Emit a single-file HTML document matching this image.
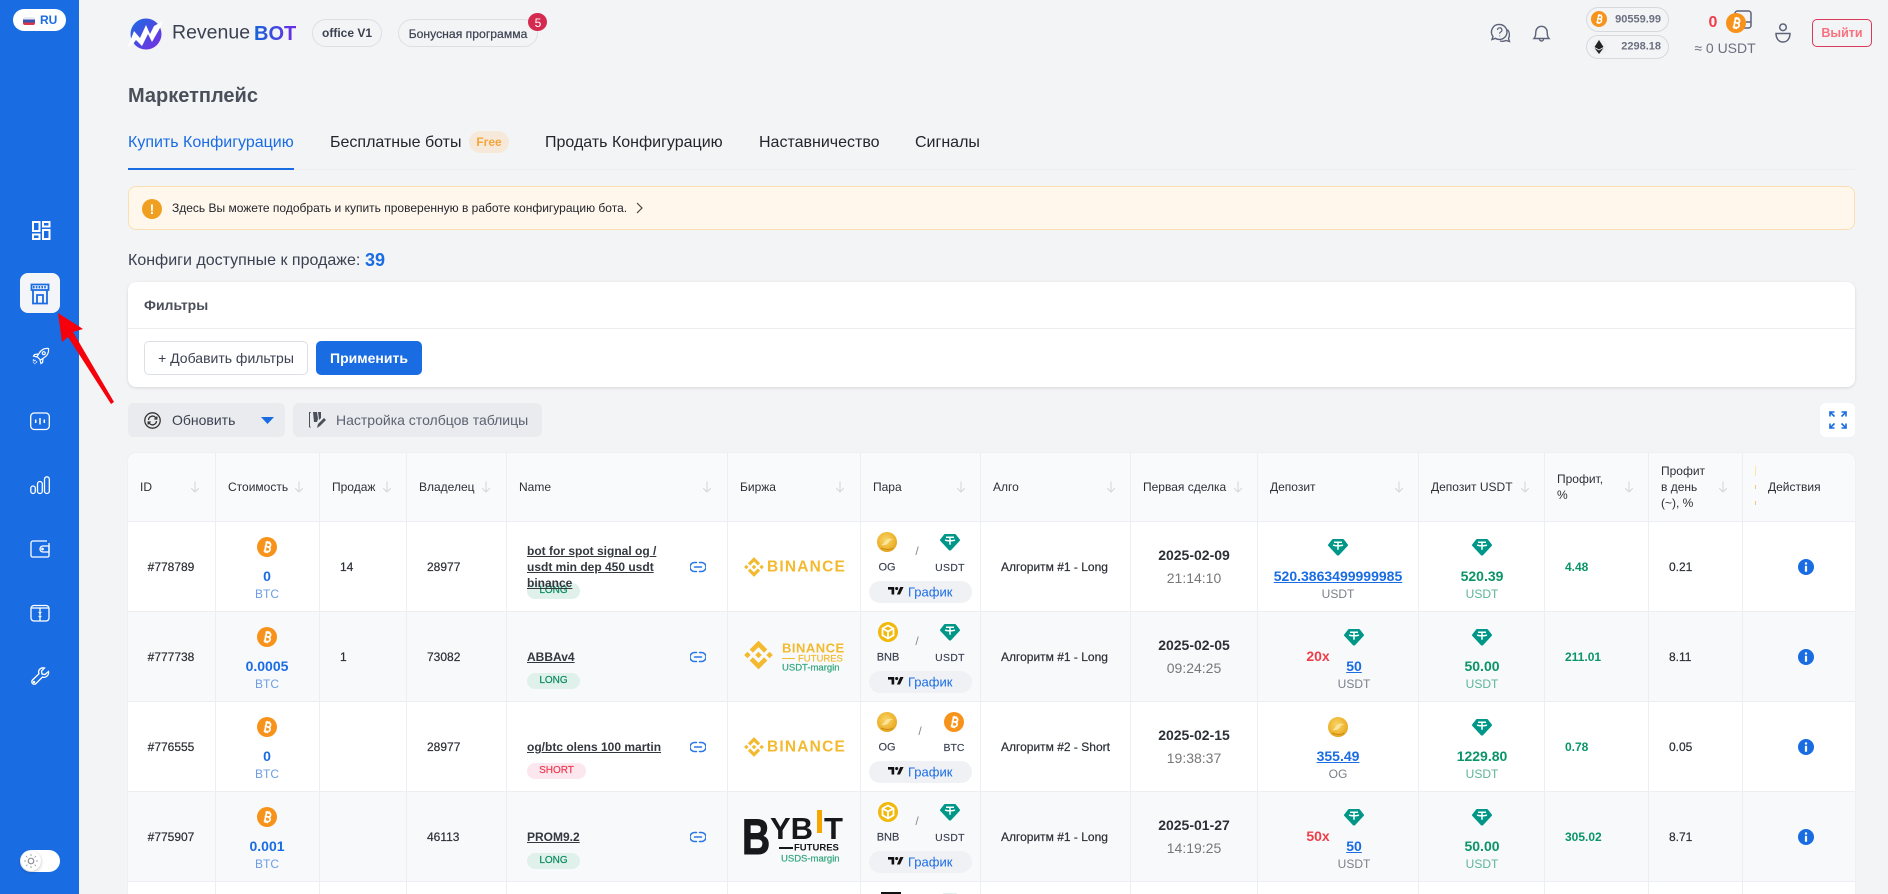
<!DOCTYPE html>
<html lang="ru"><head><meta charset="utf-8"><title>Маркетплейс</title>
<style>
html,body{margin:0;padding:0;width:1888px;height:894px;overflow:hidden;background:#f3f4f6;font-family:"Liberation Sans",Arial,sans-serif;color:#2b2f36}
*{box-sizing:border-box}
.a{position:absolute}
.t{position:absolute;white-space:nowrap;line-height:1;transform:translateY(-50%)}
.c{position:absolute;white-space:nowrap;line-height:1;transform:translate(-50%,-50%);text-align:center}
.m{-webkit-text-stroke:.2px currentColor}
.b{font-weight:700}
svg{position:absolute;overflow:visible}
.pill{position:absolute;border:1px solid #dcdfe4;border-radius:20px}
.row{position:absolute;left:128px;width:1727px;height:90px;border-bottom:1px solid #eceef2;background:#fff}
.row.e{background:#f8f9fb}
.row>*{margin-left:-128px}
.h{font-size:12px;color:#2b2f36}
.id{font-size:12px;-webkit-text-stroke:.2px}
.v{font-size:14px;font-weight:700;color:#1a6ce3}
.u{font-size:12px;color:#6e9de6}
.n{font-size:12px;font-weight:700;text-decoration:underline;color:#33373e}
.bd{position:absolute;height:16px;border-radius:8px;font-size:10px;line-height:16px;text-align:center;-webkit-text-stroke:.2px}
.long{width:53px;background:#dff1ea;color:#0b8a60}
.short{width:59px;background:#fbe7ed;color:#ee3b52}
.lb{font-size:11px;color:#3b4150;-webkit-text-stroke:.15px}
.gr{position:absolute;left:869px;top:59px;width:103px;height:22px;border-radius:11px;background:#eff1f4}
.grt{font-size:13px;color:#1a6ce3;left:908px;top:70px}
.g{font-size:14px;font-weight:700;color:#0a9468}
.gu{font-size:12px;color:#5cb596}
.gu2{font-size:12px;color:#7a7f88}
.link{color:#1a6ce3;font-size:14px;font-weight:700;text-decoration:underline}
.vl{position:absolute;top:453px;height:441px;width:1px;background:#eceef2}
.bn{font-weight:700;font-size:15.500px;letter-spacing:1.200px;color:#f3ba2f}
</style></head><body>
<svg width="0" height="0" style="position:absolute"><defs>
<symbol id="btc" viewBox="0 0 20 20"><circle cx="10" cy="10" r="10" fill="#f7931a"/><g transform="rotate(12 10 10)" fill="none" stroke="#fff" stroke-width="1.700"><path d="M7.600 5.600h3.300c1.400 0 2.200.8 2.200 2s-.8 2.100-2.200 2.100H7.600m3.300.2c1.700 0 2.700.9 2.700 2.200s-1 2.300-2.700 2.300H7.600M8.700 5.500v9M9.300 4v1.600M11.300 4v1.600M9.300 14.200V16M11.300 14.200V16"/></g></symbol>
<symbol id="usdt" viewBox="0 0 20 20"><path d="M5.200 2h9.600c.5 0 .9.200 1.200.6l3.700 4.800c.4.500.4 1.100 0 1.500l-8.600 9.200c-.6.600-1.600.6-2.200 0L.3 8.900c-.4-.4-.4-1 0-1.500L4 2.600c.3-.4.700-.6 1.200-.6z" fill="#009688"/><path d="M6 5.300h8M10 5.300v7.400M5 8.100c2.500 1 7.500 1 10 0" fill="none" stroke="#fff" stroke-width="1.500"/></symbol>
<radialGradient id="ogg" cx=".45" cy=".4" r=".7"><stop offset="0" stop-color="#f8d66a"/><stop offset=".65" stop-color="#eeb32e"/><stop offset="1" stop-color="#d99a1b"/></radialGradient>
<symbol id="og" viewBox="0 0 20 20"><circle cx="10" cy="10" r="10" fill="url(#ogg)"/><path d="M4 13c3-1 4-5 7-6s4 0 5 1c-2-.5-3 .5-4 2s-3 4-8 3z" fill="#fbe9a8" opacity=".85"/><path d="M4 16c4 2 9 2 12 0" stroke="#c98a10" fill="none"/></symbol>
<symbol id="bnb" viewBox="0 0 20 20"><circle cx="10" cy="10" r="10" fill="#f0b90b"/><path d="M10 3.500l5.500 3v6.700L10 16.500l-5.500-3.300V6.500zM4.500 6.500l5.500 3 5.500-3M10 9.500v7" fill="none" stroke="#fff" stroke-width="1.800"/></symbol>
<symbol id="lnk" viewBox="0 0 16 12"><path d="M6.500 1.500H4.500a4.500 4.500 0 0 0 0 9h2M9.500 1.500h2a4.500 4.500 0 0 1 0 9h-2M4.500 6h7" fill="none" stroke="#2a78e4" stroke-width="1.500" stroke-linecap="round"/></symbol>
<symbol id="inf" viewBox="0 0 16 16"><circle cx="8" cy="8" r="8" fill="#1a6ce3"/><circle cx="8" cy="4.500" r="1.200" fill="#fff"/><rect x="6.900" y="6.800" width="2.200" height="6" rx=".6" fill="#fff"/></symbol>
<symbol id="arr" viewBox="0 0 10 12"><path d="M5 .5v10.500M1.200 7.200 5 11l3.800-3.800" fill="none" stroke="#d6d8dd" stroke-width="1.100"/></symbol>
<symbol id="tv" viewBox="0 0 36 24"><path d="M14 20H8V9H0V3h14zM27 20h-7l7.500-17H35z" fill="#111"/><circle cx="19.500" cy="6.500" r="3.500" fill="#111"/></symbol>
<symbol id="bi" viewBox="0 0 126 126"><path d="M38.730 53.200 63 28.930l24.280 24.280 14.120-14.120L63 .69 24.610 39.090zM.69 63l14.120-14.120L28.930 63 14.810 77.120zM38.730 72.800 63 97.070l24.280-24.280 14.130 14.110L63 125.310 24.600 86.910zM97.070 63l14.120-14.120L125.310 63l-14.120 14.120zM77.330 63 63 48.660 52.400 59.260l-1.220 1.220-2.510 2.520L63 77.330z" fill="#f3ba2f"/></symbol>
<linearGradient id="lg" x1="0" y1="0" x2="1" y2="1"><stop offset="0" stop-color="#1a6ce3"/><stop offset="1" stop-color="#7a2be0"/></linearGradient>
<linearGradient id="bt" x1="0" x2="1" y1="0" y2="0"><stop offset="0" stop-color="#1467d8"/><stop offset="1" stop-color="#6d2be6"/></linearGradient>
</defs></svg>

<!-- Sidebar -->
<div class="a" style="left:0;top:0;width:79px;height:894px;background:#1a6ce3"></div>
<div class="a" style="left:13px;top:9px;width:53px;height:22px;border-radius:11px;background:#fff"></div>
<div class="a" style="left:23px;top:17px;width:12px;height:8px;border-radius:2px;background:linear-gradient(#e9ebf0 0 33%,#3a55b0 33% 66%,#d8344a 66%)"></div>
<div class="t b" style="left:40px;top:20px;font-size:12px;color:#1a6ce3">RU</div>

<svg style="left:31px;top:220px" width="20" height="20" viewBox="0 0 20 20" fill="none" stroke="#fff" stroke-width="2"><rect x="2" y="2" width="6.500" height="9"/><rect x="12" y="2" width="6.500" height="4.500"/><rect x="2" y="14.500" width="6.500" height="4.500"/><rect x="12" y="10" width="6.500" height="9"/></svg>
<div class="a" style="left:20px;top:273px;width:40px;height:40px;border-radius:8px;background:#f3f5f9"></div>
<svg style="left:30px;top:283px" width="20" height="22" viewBox="0 0 20 22" fill="none" stroke="#1a6ce3" stroke-width="1.800"><path d="M3 7v13.500h14V7"/><path d="M1.500 1.500h17v5.500h-17z"/><path d="M7 20V12h6v8"/><path d="M3 4.200h14" stroke="#1a6ce3" stroke-width="2.400" stroke-dasharray="1.600 1.200"/></svg>
<svg style="left:31px;top:346px" width="20" height="20" viewBox="0 0 20 20" fill="none" stroke="#fff" stroke-width="1.200"><path d="M17.500 2.500c-4-.5-7.500 1.500-9.500 5l-2 3 3.500 3.500 3-2c3.500-2 5.500-5.500 5-9.500z"/><circle cx="12.800" cy="7.200" r="1.500"/><path d="M7 8l-3.500.5L2.500 10l3.500 1M12 13l-.5 3.500L10 17.500 9 14"/><path d="M4.500 14l-2.500 2.500M6 15.500 3.500 18M3 13.500 1.500 15" stroke-dasharray="1.500 1"/></svg>
<svg style="left:30px;top:411px" width="20" height="20" viewBox="0 0 20 20" fill="none" stroke="#fff" stroke-width="1.300"><rect x=".7" y="2" width="18.600" height="16.500" rx="3.500"/><path d="M10 7v6.500M5.700 8.500v3.500M14.300 8.500v3.500" stroke-width="1.500"/></svg>
<svg style="left:30px;top:476px" width="20" height="20" viewBox="0 0 20 20" fill="none" stroke="#fff" stroke-width="1.300"><rect x=".8" y="10" width="4.500" height="7.500" rx="2.250"/><rect x="7.500" y="5.500" width="4.800" height="12" rx="2.400"/><rect x="14.500" y=".8" width="4.800" height="16.700" rx="2.400"/></svg>
<svg style="left:30px;top:540px" width="20" height="18" viewBox="0 0 20 18" fill="none" stroke="#fff" stroke-width="1.300"><path d="M17 1H3a2 2 0 0 0-2 2v12.500a1.500 1.500 0 0 0 1.500 1.500h15a1.500 1.500 0 0 0 1.500-1.500V3"/><path d="M19 6h-6a3 3 0 0 0 0 6h6z"/><circle cx="12.500" cy="9" r=".7" fill="#fff"/></svg>
<svg style="left:30px;top:604px" width="20" height="18" viewBox="0 0 20 18" fill="none" stroke="#fff" stroke-width="1.300"><rect x="1" y="1.500" width="18" height="15.500" rx="3"/><path d="M1 4h18M10 4v13"/><path d="M8.500 8l1.500 1.500L11.500 8M8.500 12l1.500 1.500 1.500-1.500" stroke-width=".8"/></svg>
<svg style="left:30px;top:666px" width="20" height="20" viewBox="0 0 20 20" fill="none" stroke="#fff" stroke-width="1.300"><path d="M18.500 5.500c.5 2-.5 4-2 5s-3 1-4 .5L6 17.500c-1 1-2.500 1-3.500 0S1.500 15 2.500 14L9 7.700c-.6-1.200-.6-2.800.5-4.200s3-2 5-1.500L11.500 5l.5 3 3 .5z"/><circle cx="4" cy="16" r=".6"/></svg>
<svg style="left:0;top:0" width="130" height="420"><polygon points="58,313 83,329 73,332 114,402 111,404 68,337 62,342" fill="#f5000b"/></svg>
<div class="a" style="left:20px;top:850px;width:40px;height:22px;border-radius:11px;background:#fff"></div>
<div class="a" style="left:21px;top:851px;width:20px;height:20px;border-radius:50%;background:#fff;box-shadow:0 1px 3px rgba(0,0,0,.25)"></div>
<svg style="left:24px;top:854px" width="14" height="14" viewBox="0 0 14 14" fill="none" stroke="#8a8f98"><circle cx="7" cy="7" r="2.800" stroke-width="1.200"/><path d="M7 0v2M7 12v2M0 7h2M12 7h2M2 2l1.400 1.400M10.600 10.600 12 12M2 12l1.400-1.400M10.600 3.400 12 2" stroke-width=".8"/></svg>

<!-- Header -->
<svg style="left:128px;top:17px" width="36" height="33" viewBox="0 0 36 33"><circle cx="18" cy="17" r="15.500" fill="url(#lg)"/><path d="M0 30l6-16 6 7 6-13 4 9 4-8 9-5-3 7-8 14-4-8-6 12-6-6-3 4z" fill="#fff"/></svg>
<div class="t" style="left:172px;top:33px;font-size:19.500px;color:#3b4150">Revenue</div>
<svg style="left:254px;top:20px" width="44" height="26"><text x="0" y="20" font-family="Liberation Sans" font-weight="700" font-size="20" fill="url(#bt)">BOT</text></svg>
<div class="pill" style="left:312px;top:19px;width:70px;height:28px"></div>
<div class="c b" style="left:347px;top:33px;font-size:12px;color:#3b4150">office V1</div>
<div class="pill" style="left:398px;top:19px;width:140px;height:28px"></div>
<div class="c m" style="left:468px;top:34px;font-size:12.200px;color:#3b4150">Бонусная программа</div>
<div class="a" style="left:528px;top:13px;width:19px;height:18px;border-radius:50%;background:#d42a50"></div>
<div class="c" style="left:538px;top:22.500px;font-size:12px;color:#fff">5</div>

<svg style="left:1490px;top:23px" width="22" height="21" viewBox="0 0 22 21" fill="none" stroke="#5c6278" stroke-width="1.400"><path d="M9.500 1.500a7.500 7.500 0 0 1 0 15c-1.500 0-3-.4-4-1.200L2 16.500l1-3a7.500 7.500 0 0 1 6.500-12z"/><path d="M17.500 6.500c2 2.500 2.500 6 1 9l1 3-3.500-1c-2 1-4 1-6 .5"/><path d="M7.500 7a2.200 2.200 0 1 1 3.300 1.900c-.8.5-1.200.9-1.200 1.800M9.600 12.500v.8" stroke-width="1.200"/></svg>
<svg style="left:1533px;top:23px" width="17" height="20" viewBox="0 0 17 20" fill="none" stroke="#5c6278" stroke-width="1.400"><path d="M1 15.500c1.300-1.300 1.800-3 1.800-6.500a5.700 5.700 0 0 1 11.400 0c0 3.500.5 5.200 1.800 6.500zM6.500 16a2 2 0 0 0 4 0"/></svg>
<div class="pill" style="left:1586px;top:7px;width:83px;height:25px;border-width:1.500px;border-color:#d7d9de"></div>
<svg style="left:1591px;top:11px" width="16" height="16"><use href="#btc" width="16" height="16"/></svg>
<div class="t b" style="right:227px;top:20px;font-size:11px;color:#6b7080">90559.99</div>
<div class="pill" style="left:1586px;top:35px;width:83px;height:24px;border-width:1.500px;border-color:#d7d9de"></div>
<div class="a" style="left:1591px;top:39px;width:16px;height:16px;border-radius:50%;background:#eef0f2"></div>
<svg style="left:1594px;top:40px" width="10" height="14" viewBox="0 0 10 14"><path d="M5 0l4.500 7L5 9.500.5 7zM5 14l4.500-6L5 10.500.5 8z" fill="#222"/></svg>
<div class="t b" style="right:227px;top:47px;font-size:11px;color:#6b7080">2298.18</div>
<div class="c b" style="left:1713px;top:23px;font-size:16px;color:#ef3e4a">0</div>
<svg style="left:1733px;top:10px" width="20" height="20" viewBox="0 0 20 20" fill="none" stroke="#5c6278" stroke-width="1.500"><path d="M2 5V3.500A2.500 2.500 0 0 1 4.500 1h11A2.500 2.500 0 0 1 18 3.500v12a2.500 2.500 0 0 1-2.500 2.500H10"/><path d="M13 12h5"/></svg>
<svg style="left:1726px;top:13px" width="20" height="20"><use href="#btc" width="20" height="20"/></svg>
<div class="c" style="left:1725px;top:48px;font-size:14px;color:#6b7080">≈ 0 USDT</div>
<svg style="left:1775px;top:23px" width="16" height="20" viewBox="0 0 16 20" fill="none" stroke="#5c6278" stroke-width="1.500"><circle cx="8" cy="4.300" r="3.300"/><path d="M1 10.500h14c0 4-2 8.500-7 8.500s-7-4.500-7-8.500z"/></svg>
<div class="a" style="left:1812px;top:19px;width:60px;height:28px;border:1px solid #d9395a;border-radius:5px"></div>
<div class="c b" style="left:1842px;top:33px;font-size:12.500px;color:#f7727f">Выйти</div>

<!-- Title / tabs -->
<div class="t b" style="left:128px;top:96px;font-size:20px;color:#4a4f5a">Маркетплейс</div>
<div class="a" style="left:128px;top:169px;width:1727px;height:1px;background:#eceef1"></div>
<div class="a" style="left:128px;top:168px;width:166px;height:2px;background:#1a6ce3"></div>
<div class="t" style="left:128px;top:143px;font-size:16px;color:#1a6ce3">Купить Конфигурацию</div>
<div class="t" style="left:330px;top:143px;font-size:16px;color:#22262c">Бесплатные боты</div>
<div class="a" style="left:469px;top:131px;width:40px;height:22px;border-radius:11px;background:#f6e9d9"></div>
<div class="c b" style="left:489px;top:142px;font-size:12px;color:#f5a53b">Free</div>
<div class="t" style="left:545px;top:143px;font-size:16px;color:#22262c">Продать Конфигурацию</div>
<div class="t" style="left:759px;top:143px;font-size:16px;color:#22262c">Наставничество</div>
<div class="t" style="left:915px;top:143px;font-size:16px;color:#22262c">Сигналы</div>

<!-- Alert -->
<div class="a" style="left:128px;top:186px;width:1727px;height:44px;background:#fff6ec;border:1px solid #fbdfb3;border-radius:8px"></div>
<div class="a" style="left:142px;top:199px;width:20px;height:20px;border-radius:50%;background:#f0a020"></div>
<div class="c b" style="left:152px;top:209px;font-size:14px;color:#fff">!</div>
<div class="t" style="left:172px;top:208px;font-size:12px;color:#22262c">Здесь Вы можете подобрать и купить проверенную в работе конфигурацию бота.</div>
<svg style="left:636px;top:202px" width="8" height="12" viewBox="0 0 8 12" fill="none" stroke="#444" stroke-width="1.200"><path d="M1 1l5 5-5 5"/></svg>
<div class="t" style="left:128px;top:261px;font-size:16px;color:#3b4150">Конфиги доступные к продаже:</div>
<div class="t b" style="left:365px;top:260px;font-size:18px;color:#1a6ce3">39</div>

<!-- Filters -->
<div class="a" style="left:128px;top:282px;width:1727px;height:105px;background:#fff;border-radius:8px;box-shadow:0 1px 3px rgba(0,0,0,.12)"></div>
<div class="a" style="left:128px;top:328px;width:1727px;height:1px;background:#eceef1"></div>
<div class="t b" style="left:144px;top:305px;font-size:14px;color:#4a4f5a">Фильтры</div>
<div class="a" style="left:144px;top:341px;width:164px;height:34px;border:1px solid #dcdfe4;border-radius:5px;background:#fff"></div>
<div class="c" style="left:226px;top:358px;font-size:14px;color:#3b4150">+ Добавить фильтры</div>
<div class="a" style="left:316px;top:341px;width:106px;height:34px;border-radius:5px;background:#1a6ce3"></div>
<div class="c b" style="left:369px;top:358px;font-size:14px;color:#fff">Применить</div>

<!-- Toolbar -->
<div class="a" style="left:128px;top:403px;width:157px;height:34px;border-radius:6px;background:#e9ebee"></div>
<svg style="left:144px;top:412px" width="17" height="17" viewBox="0 0 17 17" fill="none" stroke="#333" stroke-width="1.300"><circle cx="8.500" cy="8.500" r="7.700"/><path d="M4.500 8a4 4 0 0 1 7-2.500l1 1M12.500 9a4 4 0 0 1-7 2.500l-1-1M12.800 4.500v2.500h-2.500M4.200 12.500V10h2.500"/></svg>
<div class="t" style="left:172px;top:420px;font-size:14px;color:#3b4150">Обновить</div>
<svg style="left:261px;top:417px" width="13" height="7"><path d="M0 0h13L6.500 7z" fill="#1a6ce3"/></svg>
<div class="a" style="left:293px;top:403px;width:249px;height:34px;border-radius:6px;background:#e9ebee"></div>
<svg style="left:309px;top:411px" width="17" height="18" viewBox="0 0 17 18"><path d="M4 1h4l1 7-1 3H5zM9 1h3v6l-2 2zM0 1h2v.7H1v14h1v.7H0z" fill="#4a4f5a"/><path d="M8 17l1-4 6-6 2 2-6 6z" fill="#4a4f5a"/></svg>
<div class="t" style="left:336px;top:420px;font-size:14px;color:#5c6270">Настройка столбцов таблицы</div>
<div class="a" style="left:1820px;top:403px;width:35px;height:34px;border-radius:6px;background:#fff"></div>
<svg style="left:1829px;top:411px" width="18" height="18" viewBox="0 0 18 18" fill="none" stroke="#1a6ce3" stroke-width="1.600"><path d="M1 5.500V1h4.500M1 1l4.500 4.500M12.500 1H17v4.500M17 1l-4.500 4.500M1 12.500V17h4.500M1 17l4.500-4.500M17 12.500V17h-4.500M17 17l-4.500-4.500"/></svg>

<!-- Table -->
<div class="a" style="left:128px;top:453px;width:1727px;height:441px;background:#fff;border-radius:8px 8px 0 0;box-shadow:0 0 2px rgba(0,0,0,.06)"></div>
<div class="a" style="left:128px;top:453px;width:1727px;height:69px;background:#f9fafc;border-radius:8px 8px 0 0;border-bottom:1px solid #eceef2"></div>
<div class="t h" style="left:140px;top:487px">ID</div><svg style="left:190px;top:481px" width="10" height="12"><use href="#arr"/></svg>
<div class="t h" style="left:228px;top:487px">Стоимость</div><svg style="left:294px;top:481px" width="10" height="12"><use href="#arr"/></svg>
<div class="t h" style="left:332px;top:487px">Продаж</div><svg style="left:382px;top:481px" width="10" height="12"><use href="#arr"/></svg>
<div class="t h" style="left:419px;top:487px">Владелец</div><svg style="left:481px;top:481px" width="10" height="12"><use href="#arr"/></svg>
<div class="t h" style="left:519px;top:487px">Name</div><svg style="left:702px;top:481px" width="10" height="12"><use href="#arr"/></svg>
<div class="t h" style="left:740px;top:487px">Биржа</div><svg style="left:835px;top:481px" width="10" height="12"><use href="#arr"/></svg>
<div class="t h" style="left:873px;top:487px">Пара</div><svg style="left:956px;top:481px" width="10" height="12"><use href="#arr"/></svg>
<div class="t h" style="left:993px;top:487px">Алго</div><svg style="left:1106px;top:481px" width="10" height="12"><use href="#arr"/></svg>
<div class="t h" style="left:1143px;top:487px">Первая сделка</div><svg style="left:1233px;top:481px" width="10" height="12"><use href="#arr"/></svg>
<div class="t h" style="left:1270px;top:487px">Депозит</div><svg style="left:1394px;top:481px" width="10" height="12"><use href="#arr"/></svg>
<div class="t h" style="left:1431px;top:487px">Депозит USDT</div><svg style="left:1520px;top:481px" width="10" height="12"><use href="#arr"/></svg>
<div class="t h" style="left:1557px;top:479px">Профит,</div><div class="t h" style="left:1557px;top:495px">%</div><svg style="left:1624px;top:481px" width="10" height="12"><use href="#arr"/></svg>
<div class="t h" style="left:1661px;top:471px">Профит</div><div class="t h" style="left:1661px;top:487px">в день</div><div class="t h" style="left:1661px;top:503px">(~), %</div><svg style="left:1718px;top:481px" width="10" height="12"><use href="#arr"/></svg>
<div class="t h" style="left:1768px;top:487px">Действия</div>
<div class="a" style="left:1755px;top:466px;width:1px;height:10px;background:#fbe9a0"></div>
<div class="a" style="left:1755px;top:485px;width:1px;height:4px;background:#f5c878"></div>
<div class="a" style="left:1755px;top:501px;width:1px;height:4px;background:#f5c878"></div>

<!-- Row 1 -->
<div class="row" style="top:522px">
<div class="c id" style="left:171px;top:45px">#778789</div>
<svg style="left:257px;top:15px" width="20" height="20"><use href="#btc" width="20" height="20"/></svg>
<div class="c v" style="left:267px;top:53.500px">0</div><div class="c u" style="left:267px;top:71.500px">BTC</div>
<div class="t id" style="left:340px;top:45px">14</div>
<div class="t id" style="left:427px;top:45px">28977</div>
<div class="bd long" style="left:527px;top:61px">LONG</div>
<div class="t n" style="left:527px;top:29px">bot for spot signal og /</div>
<div class="t n" style="left:527px;top:45px">usdt min dep 450 usdt</div>
<div class="t n" style="left:527px;top:61px">binance</div>
<svg style="left:690px;top:39px" width="16" height="12"><use href="#lnk" width="16" height="12"/></svg>
<svg style="left:744px;top:35px" width="20" height="20"><use href="#bi" width="20" height="20"/></svg>
<div class="t bn" style="left:767px;top:45px">BINANCE</div>
<svg style="left:877px;top:10px" width="20" height="20"><use href="#og" width="20" height="20"/></svg>
<svg style="left:940px;top:10px" width="20" height="20"><use href="#usdt" width="20" height="20"/></svg>
<div class="c" style="left:917px;top:29px;font-size:12px;color:#888">/</div>
<div class="c lb" style="left:887px;top:46px">OG</div><div class="c lb" style="left:950px;top:46px;font-size:10.500px;letter-spacing:.3px">USDT</div>
<div class="gr"></div><svg style="left:888px;top:63px" width="16" height="12"><use href="#tv" width="16" height="12"/></svg><div class="t grt">График</div>
<div class="t id" style="left:1001px;top:45px">Алгоритм #1 - Long</div>
<div class="c b" style="left:1194px;top:32.500px;font-size:14px">2025-02-09</div>
<div class="c" style="left:1194px;top:56px;font-size:14px;color:#777">21:14:10</div>
<svg style="left:1328px;top:15px" width="20" height="20"><use href="#usdt" width="20" height="20"/></svg>
<div class="c link" style="left:1338px;top:53.500px">520.3863499999985</div><div class="c gu2" style="left:1338px;top:71.500px">USDT</div>
<svg style="left:1472px;top:15px" width="20" height="20"><use href="#usdt" width="20" height="20"/></svg>
<div class="c g" style="left:1482px;top:53.500px">520.39</div><div class="c gu" style="left:1482px;top:71.500px">USDT</div>
<div class="t b" style="left:1565px;top:45px;font-size:12px;color:#0a9468">4.48</div>
<div class="t id" style="left:1669px;top:45px">0.21</div>
<svg style="left:1798px;top:37px" width="16" height="16"><use href="#inf" width="16" height="16"/></svg>
</div>

<!-- Row 2 -->
<div class="row e" style="top:612px">
<div class="c id" style="left:171px;top:45px">#777738</div>
<svg style="left:257px;top:15px" width="20" height="20"><use href="#btc" width="20" height="20"/></svg>
<div class="c v" style="left:267px;top:53.500px">0.0005</div><div class="c u" style="left:267px;top:71.500px">BTC</div>
<div class="t id" style="left:340px;top:45px">1</div>
<div class="t id" style="left:427px;top:45px">73082</div>
<div class="t n" style="left:527px;top:45px">ABBAv4</div>
<div class="bd long" style="left:527px;top:61px">LONG</div>
<svg style="left:690px;top:39px" width="16" height="12"><use href="#lnk" width="16" height="12"/></svg>
<svg style="left:744px;top:28px" width="29" height="30"><use href="#bi" width="29" height="30"/></svg>
<div class="t b" style="left:782px;top:36px;font-size:13px;letter-spacing:.5px;color:#f3ba2f">BINANCE</div>
<div class="a" style="left:782px;top:46px;width:13px;height:1px;background:#f3ba2f"></div>
<div class="t" style="left:798px;top:47px;font-size:9.500px;color:#f3ba2f;-webkit-text-stroke:.2px">FUTURES</div>
<div class="t" style="left:782px;top:56px;font-size:9.500px;color:#2fa57a;-webkit-text-stroke:.2px">USDT-margin</div>
<svg style="left:878px;top:10px" width="20" height="20"><use href="#bnb" width="20" height="20"/></svg>
<svg style="left:940px;top:10px" width="20" height="20"><use href="#usdt" width="20" height="20"/></svg>
<div class="c" style="left:917px;top:29px;font-size:12px;color:#888">/</div>
<div class="c lb" style="left:888px;top:46px">BNB</div><div class="c lb" style="left:950px;top:46px;font-size:10.500px;letter-spacing:.3px">USDT</div>
<div class="gr"></div><svg style="left:888px;top:63px" width="16" height="12"><use href="#tv" width="16" height="12"/></svg><div class="t grt">График</div>
<div class="t id" style="left:1001px;top:45px">Алгоритм #1 - Long</div>
<div class="c b" style="left:1194px;top:32.500px;font-size:14px">2025-02-05</div>
<div class="c" style="left:1194px;top:56px;font-size:14px;color:#777">09:24:25</div>
<div class="c b" style="left:1318px;top:44px;font-size:14px;color:#ef3e4a">20x</div>
<svg style="left:1344px;top:15px" width="20" height="20"><use href="#usdt" width="20" height="20"/></svg>
<div class="c link" style="left:1354px;top:53.500px">50</div><div class="c gu2" style="left:1354px;top:71.500px">USDT</div>
<svg style="left:1472px;top:15px" width="20" height="20"><use href="#usdt" width="20" height="20"/></svg>
<div class="c g" style="left:1482px;top:53.500px">50.00</div><div class="c gu" style="left:1482px;top:71.500px">USDT</div>
<div class="t b" style="left:1565px;top:45px;font-size:12px;color:#0a9468">211.01</div>
<div class="t id" style="left:1669px;top:45px">8.11</div>
<svg style="left:1798px;top:37px" width="16" height="16"><use href="#inf" width="16" height="16"/></svg>
</div>

<!-- Row 3 -->
<div class="row" style="top:702px">
<div class="c id" style="left:171px;top:45px">#776555</div>
<svg style="left:257px;top:15px" width="20" height="20"><use href="#btc" width="20" height="20"/></svg>
<div class="c v" style="left:267px;top:53.500px">0</div><div class="c u" style="left:267px;top:71.500px">BTC</div>
<div class="t id" style="left:427px;top:45px">28977</div>
<div class="t n" style="left:527px;top:45px">og/btc olens 100 martin</div>
<div class="bd short" style="left:527px;top:61px">SHORT</div>
<svg style="left:690px;top:39px" width="16" height="12"><use href="#lnk" width="16" height="12"/></svg>
<svg style="left:744px;top:35px" width="20" height="20"><use href="#bi" width="20" height="20"/></svg>
<div class="t bn" style="left:767px;top:45px">BINANCE</div>
<svg style="left:877px;top:10px" width="20" height="20"><use href="#og" width="20" height="20"/></svg>
<svg style="left:944px;top:10px" width="20" height="20"><use href="#btc" width="20" height="20"/></svg>
<div class="c" style="left:920px;top:29px;font-size:12px;color:#888">/</div>
<div class="c lb" style="left:887px;top:46px">OG</div><div class="c lb" style="left:954px;top:46px;font-size:10.500px">BTC</div>
<div class="gr"></div><svg style="left:888px;top:63px" width="16" height="12"><use href="#tv" width="16" height="12"/></svg><div class="t grt">График</div>
<div class="t id" style="left:1001px;top:45px">Алгоритм #2 - Short</div>
<div class="c b" style="left:1194px;top:32.500px;font-size:14px">2025-02-15</div>
<div class="c" style="left:1194px;top:56px;font-size:14px;color:#777">19:38:37</div>
<svg style="left:1328px;top:15px" width="20" height="20"><use href="#og" width="20" height="20"/></svg>
<div class="c link" style="left:1338px;top:53.500px">355.49</div><div class="c gu2" style="left:1338px;top:71.500px">OG</div>
<svg style="left:1472px;top:15px" width="20" height="20"><use href="#usdt" width="20" height="20"/></svg>
<div class="c g" style="left:1482px;top:53.500px">1229.80</div><div class="c gu" style="left:1482px;top:71.500px">USDT</div>
<div class="t b" style="left:1565px;top:45px;font-size:12px;color:#0a9468">0.78</div>
<div class="t id" style="left:1669px;top:45px">0.05</div>
<svg style="left:1798px;top:37px" width="16" height="16"><use href="#inf" width="16" height="16"/></svg>
</div>

<!-- Row 4 -->
<div class="row e" style="top:792px">
<div class="c id" style="left:171px;top:45px">#775907</div>
<svg style="left:257px;top:15px" width="20" height="20"><use href="#btc" width="20" height="20"/></svg>
<div class="c v" style="left:267px;top:53.500px">0.001</div><div class="c u" style="left:267px;top:71.500px">BTC</div>
<div class="t id" style="left:427px;top:45px">46113</div>
<div class="t n" style="left:527px;top:45px">PROM9.2</div>
<div class="bd long" style="left:527px;top:61px">LONG</div>
<svg style="left:690px;top:39px" width="16" height="12"><use href="#lnk" width="16" height="12"/></svg>
<svg style="left:744px;top:16px" width="102" height="62"><g font-family="Liberation Sans" font-weight="700" fill="#17181c"><text transform="translate(-2 46) scale(.78 1)" font-size="50" stroke="#17181c" stroke-width="1">B</text><text x="26" y="31" font-size="31">YB</text><text x="80" y="31" font-size="31">T</text></g><rect x="73" y="2" width="5" height="23" fill="#f7a600"/></svg>
<div class="a" style="left:779px;top:847px;margin-top:-792px;width:14px;height:1.500px;background:#17181c"></div>
<div class="t b" style="left:794px;top:56px;font-size:9.500px;color:#17181c">FUTURES</div>
<div class="t" style="left:781px;top:67px;font-size:9.500px;color:#2fa57a;-webkit-text-stroke:.2px">USDS-margin</div>
<svg style="left:878px;top:10px" width="20" height="20"><use href="#bnb" width="20" height="20"/></svg>
<svg style="left:940px;top:10px" width="20" height="20"><use href="#usdt" width="20" height="20"/></svg>
<div class="c" style="left:917px;top:29px;font-size:12px;color:#888">/</div>
<div class="c lb" style="left:888px;top:46px">BNB</div><div class="c lb" style="left:950px;top:46px;font-size:10.500px;letter-spacing:.3px">USDT</div>
<div class="gr"></div><svg style="left:888px;top:63px" width="16" height="12"><use href="#tv" width="16" height="12"/></svg><div class="t grt">График</div>
<div class="t id" style="left:1001px;top:45px">Алгоритм #1 - Long</div>
<div class="c b" style="left:1194px;top:32.500px;font-size:14px">2025-01-27</div>
<div class="c" style="left:1194px;top:56px;font-size:14px;color:#777">14:19:25</div>
<div class="c b" style="left:1318px;top:44px;font-size:14px;color:#ef3e4a">50x</div>
<svg style="left:1344px;top:15px" width="20" height="20"><use href="#usdt" width="20" height="20"/></svg>
<div class="c link" style="left:1354px;top:53.500px">50</div><div class="c gu2" style="left:1354px;top:71.500px">USDT</div>
<svg style="left:1472px;top:15px" width="20" height="20"><use href="#usdt" width="20" height="20"/></svg>
<div class="c g" style="left:1482px;top:53.500px">50.00</div><div class="c gu" style="left:1482px;top:71.500px">USDT</div>
<div class="t b" style="left:1565px;top:45px;font-size:12px;color:#0a9468">305.02</div>
<div class="t id" style="left:1669px;top:45px">8.71</div>
<svg style="left:1798px;top:37px" width="16" height="16"><use href="#inf" width="16" height="16"/></svg>
</div>

<!-- Row 5 stub -->
<div class="a" style="left:881px;top:892px;width:20px;height:2px;background:#111"></div>
<div class="a" style="left:943px;top:893px;width:14px;height:1px;background:#dff1ee"></div>

<!-- Column lines -->
<div class="vl" style="left:215px"></div><div class="vl" style="left:319px"></div><div class="vl" style="left:406px"></div><div class="vl" style="left:506px"></div><div class="vl" style="left:727px"></div><div class="vl" style="left:860px"></div><div class="vl" style="left:980px"></div><div class="vl" style="left:1130px"></div><div class="vl" style="left:1257px"></div><div class="vl" style="left:1418px"></div><div class="vl" style="left:1544px"></div><div class="vl" style="left:1648px"></div><div class="vl" style="left:1742px"></div>
</body></html>
